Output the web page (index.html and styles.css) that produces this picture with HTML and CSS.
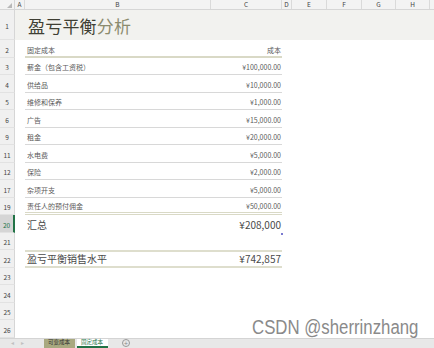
FILE: index.html
```html
<!DOCTYPE html>
<html lang="zh">
<head>
<meta charset="utf-8">
<link rel="stylesheet" href="styles.css">
</head>
<body>
<div class="sheet">
  <div class="colhead">
    <div class="corner"><span class="tri"></span></div>
    <div class="ch a">A</div>
    <div class="ch b">B</div>
    <div class="ch c">C</div>
    <div class="ch d">D</div>
    <div class="ch e">E</div>
    <div class="ch f">F</div>
    <div class="ch g">G</div>
    <div class="ch h">H</div>
    <div class="ch rest"></div>
  </div>

  <div class="row r-title">
    <div class="rh">1</div>
    <div class="title-cell"><span class="t1">盈亏平衡</span><span class="t2">分析</span></div>
  </div>

  <div class="row r-head">
    <div class="rh">2</div>
    <div class="bc line-head"><span>固定成本</span><span>成本</span></div>
  </div>

  <div class="row"><div class="rh">3</div><div class="bc line"><span>薪金（包含工资税）</span><span>¥100,000.00</span></div></div>
  <div class="row"><div class="rh">4</div><div class="bc line"><span>供给品</span><span>¥10,000.00</span></div></div>
  <div class="row"><div class="rh">5</div><div class="bc line"><span>维修和保养</span><span>¥1,000.00</span></div></div>
  <div class="row"><div class="rh">6</div><div class="bc line"><span>广告</span><span>¥15,000.00</span></div></div>
  <div class="row"><div class="rh">9</div><div class="bc line"><span>租金</span><span>¥20,000.00</span></div></div>
  <div class="row"><div class="rh">11</div><div class="bc line"><span>水电费</span><span>¥5,000.00</span></div></div>
  <div class="row"><div class="rh">12</div><div class="bc line"><span>保险</span><span>¥2,000.00</span></div></div>
  <div class="row"><div class="rh">17</div><div class="bc line"><span>杂项开支</span><span>¥5,000.00</span></div></div>
  <div class="row"><div class="rh">19</div><div class="bc line-end"><span>责任人的预付佣金</span><span>¥50,000.00</span></div></div>

  <div class="row r-big"><div class="rh sel">20</div><div class="bc big"><span>汇总</span><span>¥208,000</span><i class="dot"></i></div></div>
  <div class="row"><div class="rh">21</div><div class="bc"></div></div>
  <div class="row r-big"><div class="rh">22</div><div class="bc big boxed"><span>盈亏平衡销售水平</span><span>¥742,857</span></div></div>
  <div class="row"><div class="rh">23</div></div>
  <div class="row"><div class="rh">24</div></div>
  <div class="row"><div class="rh">25</div></div>
  <div class="row"><div class="rh">26</div></div>

  <div class="tabs">
    <div class="nav"><span>◂</span><span>▸</span></div>
    <div class="tab var">可变成本</div>
    <div class="tab fix">固定成本</div>
    <div class="plus">+</div>
  </div>

  <div class="mark">CSDN @sherrinzhang</div>
</div>
</body>
</html>
```

FILE: styles.css
```css
* { box-sizing: border-box; margin: 0; padding: 0; }
html, body { width: 434px; height: 348px; overflow: hidden; background: #fff; }
body { font-family: "Noto Sans CJK SC", "Noto Sans", sans-serif; color: #555; }

.sheet { position: relative; width: 434px; height: 348px; }

.colhead { display: flex; height: 10px; background: #f3f3f3; border-bottom: 1px solid #d6d6d6; }
.corner { width: 15px; position: relative; border-right: 1px solid #d6d6d6; }
.tri { position: absolute; right: 2px; bottom: 1px; width: 0; height: 0;
  border-left: 5px solid transparent; border-bottom: 5px solid #b8b8b8; }
.ch { font-size: 6.5px; line-height: 9px; text-align: center; color: #444; border-right: 1px solid #dadada; }
.ch.a { width: 10px; }
.ch.b { width: 186px; }
.ch.c { width: 71px; }
.ch.d { width: 10px; }
.ch.e { width: 35px; }
.ch.f { width: 35px; }
.ch.g { width: 34px; }
.ch.h { width: 34px; }
.ch.rest { flex: 1; border-right: none; }

.row { display: flex; height: 17.5px; }
.rh { width: 15px; flex: none; background: #f0f0f0; border-right: 1px solid #d6d6d6;
  border-bottom: 1px solid #e2e2e2; font-size: 6.5px; color: #444;
  display: flex; align-items: flex-end; justify-content: center; padding-bottom: 2px; }
.rh.sel { background: #d5d5d5; color: #217346; border-right: 2px solid #217346; }

.r-title { height: 30px; background: #f2f2ef; }
.r-title .rh { padding-bottom: 8px; }
.title-cell { padding-left: 13px; display: flex; align-items: center; font-size: 17px; line-height: 1; letter-spacing: 0.2px; }
.t1 { color: #3f3f33; }
.t2 { color: #8b8b6e; }

.bc { margin-left: 10px; width: 257px; display: flex; justify-content: space-between;
  align-items: flex-end; padding: 0 1px 3px 2px; font-size: 7px; line-height: 1; color: #5a5a5a; position: relative; }
.line { border-bottom: 1px solid #d8d8d8; }
.line-head { border-bottom: 2px solid #d9d9c6; padding-bottom: 2px; }
.line-end { border-bottom: 3px double #d9d9c6; padding-bottom: 2px; }
.big { font-size: 10px; color: #4a4a4a; padding-bottom: 3px; }
.boxed { border-top: 2px solid #dedecd; border-bottom: 2px solid #dedecd; padding-bottom: 2px; }
.dot { position: absolute; right: -1px; bottom: -2px; width: 2px; height: 2px; background: #7a7ad0; }

.tabs { position: absolute; left: 0; right: 0; top: 337.5px; height: 10.5px; background: #e8e8e8;
  display: flex; align-items: flex-start; border-top: 1px solid #d4d4d4; }
.nav { width: 44px; height: 9px; display: flex; gap: 7px; padding-left: 11px; font-size: 6px; line-height: 8px; color: #c0c0c0; align-items: center; }
.tab { font-size: 5.5px; line-height: 7px; padding: 0 4px; height: 9px; white-space: nowrap; }
.tab.var { background: #a9a980; color: #333; width: 31px; margin-right: 2px; }
.tab.fix { background: #fff; color: #217346; border-bottom: 2px solid #217346; width: 31px; }
.plus { margin-left: 14px; margin-top: 0.5px; width: 8px; height: 8px; border: 1px solid #999; border-radius: 50%;
  font-size: 7px; line-height: 6px; text-align: center; color: #888; }

.mark { position: absolute; left: 252px; top: 315px; font-family: "Liberation Sans", Arial, sans-serif;
  font-size: 20px; line-height: 24px; color: #8a8a8a; transform: scaleX(0.84); transform-origin: left top;
  text-shadow: 0 0 1px #fff, 0 0 1px #fff, 0 0 1px #fff; white-space: nowrap; }
```
